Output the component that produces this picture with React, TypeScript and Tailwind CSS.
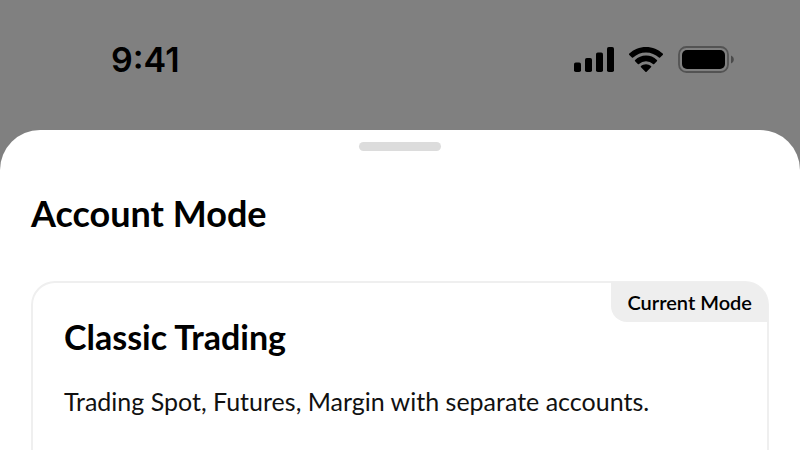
import React from 'react'

interface AccountMode {
  name: string
  description: string
  current: boolean
}

const modes: AccountMode[] = [
  {
    name: 'Classic Trading',
    description: 'Trading Spot, Futures, Margin with separate accounts.',
    current: true,
  },
]

const SignalIcon = () => (
  <svg width="40" height="26" viewBox="0 0 40 26" aria-hidden="true">
    <rect x="0" y="15.5" width="7" height="9.5" rx="1.8" />
    <rect x="11" y="11" width="7" height="14" rx="1.8" />
    <rect x="22" y="5.5" width="7" height="19.5" rx="1.8" />
    <rect x="33" y="0" width="7" height="25" rx="1.8" />
  </svg>
)

const WifiIcon = () => (
  <svg width="34" height="26" viewBox="0 0 34 26" aria-hidden="true">
    <path d="M17 0C10.500 0 4.600 2.500 .3 6.600a.9.9 0 0 0 0 1.300l2.600 2.700a.9.9 0 0 0 1.200 0A18.700 18.700 0 0 1 17 5.400c5 0 9.500 2 12.900 5.200a.9.9 0 0 0 1.200 0l2.600-2.700a.9.9 0 0 0 0-1.300C29.400 2.500 23.500 0 17 0Z" />
    <path d="M17 8.600c-4.200 0-8 1.600-10.900 4.300a.9.9 0 0 0 0 1.300l2.700 2.700a.9.9 0 0 0 1.200 0 10.300 10.300 0 0 1 14 0 .9.9 0 0 0 1.200 0l2.700-2.700a.9.9 0 0 0 0-1.300A16 16 0 0 0 17 8.600Z" />
    <path d="M17 17.200c-1.900 0-3.700.7-5 1.900a.8.8 0 0 0 0 1.200l4.400 4.400a.9.9 0 0 0 1.200 0l4.400-4.400a.8.8 0 0 0 0-1.200 7.500 7.500 0 0 0-5-1.900Z" />
  </svg>
)

const BatteryIcon = () => (
  <svg width="56" height="28" viewBox="0 0 56 28" aria-hidden="true">
    <rect
      x="1"
      y="1"
      width="49"
      height="25"
      rx="7.5"
      fill="none"
      stroke="#535353"
      strokeWidth="1.8"
    />
    <rect x="4" y="4" width="43" height="19" rx="5" />
    <path d="M53 9.500c1.700.7 2.800 2.200 2.800 4s-1.100 3.300-2.800 4Z" fill="#4a4a4a" />
  </svg>
)

const StatusBar = () => (
  <header className="flex h-[130px] items-start justify-between pt-10 pr-[66px] pl-[111px]">
    <time className="font-['Inter'] text-[34px] leading-10 font-semibold">
      9:41
    </time>
    <div className="flex items-center gap-[15px] pt-[6px]">
      <SignalIcon />
      <WifiIcon />
      <BatteryIcon />
    </div>
  </header>
)

const ModeCard: React.FC<{ mode: AccountMode }> = ({ mode }) => (
  <article className="relative flex-1 rounded-t-3xl border-2 border-b-0 border-[#efefef] px-[31px] pt-[34px]">
    {mode.current && (
      <span className="absolute -top-px -right-px rounded-tr-[23px] rounded-bl-2xl bg-[#eeeeee] px-4 py-2 text-[20px] leading-6 font-semibold">
        Current Mode
      </span>
    )}
    <h2 className="text-[34px] leading-10 font-bold">{mode.name}</h2>
    <p className="mt-7 text-[25px] leading-8 text-[#111111]">
      {mode.description}
    </p>
  </article>
)

export default function App() {
  return (
    <div className="flex min-h-screen flex-col bg-[#808080] font-['Lato',sans-serif] text-black">
      <StatusBar />
      <main className="flex flex-1 flex-col rounded-t-[40px] bg-white px-[31px] pt-3">
        <div className="h-[9px] w-[82px] self-center rounded-full bg-[#dcdcdc]" />
        <h1 className="mt-[38px] mb-11 text-[36px] leading-12 font-bold">
          Account Mode
        </h1>
        {modes.map((mode) => (
          <ModeCard key={mode.name} mode={mode} />
        ))}
      </main>
    </div>
  )
}
